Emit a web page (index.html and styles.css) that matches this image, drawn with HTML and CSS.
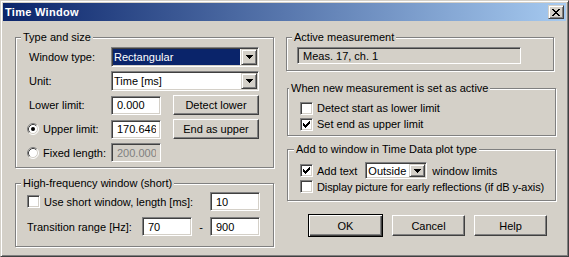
FILE: index.html
```html
<!DOCTYPE html>
<html lang="en">
<head>
  <meta charset="UTF-8" />
  <title>Time Window</title>
  <link rel="stylesheet" href="styles.css">
</head>
<body>
  <div class="window">
    <div class="titlebar">
      <span class="title">Time Window</span>
      <span class="close-btn">
        <svg width="8" height="7" viewBox="0 0 8 7"><path d="M0 0h2v1H0zM6 0h2v1H6zM1 1h2v1H1zM5 1h2v1H5zM2 2h4v1H2zM3 3h2v1H3zM2 4h4v1H2zM1 5h2v1H1zM5 5h2v1H5zM0 6h2v1H0zM6 6h2v1H6z" fill="#000"/></svg>
      </span>
    </div>

    <div class="dialog">
      <!-- left side -->
      <div class="col">
        <fieldset class="group group-type">
          <legend>Type and size</legend>
          <div class="type-grid">
            <span class="lbl">Window type:</span>
            <div class="combo combo-type">
              <span class="combo-text selected">Rectangular</span>
              <span class="drop-btn"><svg width="7" height="4" viewBox="0 0 7 4"><path d="M0 0h7v1H0zM1 1h5v1H1zM2 2h3v1H2zM3 3h1v1H3z"/></svg></span>
            </div>

            <span class="lbl">Unit:</span>
            <div class="combo combo-type">
              <span class="combo-text">Time [ms]</span>
              <span class="drop-btn"><svg width="7" height="4" viewBox="0 0 7 4"><path d="M0 0h7v1H0zM1 1h5v1H1zM2 2h3v1H2zM3 3h1v1H3z"/></svg></span>
            </div>

            <span class="lbl">Lower limit:</span>
            <input class="edit" type="text" value="0.000">
            <button class="btn btn-side">Detect lower</button>

            <label class="opt">
              <span class="radio"><svg width="12" height="12" viewBox="0 0 12 12">
                <circle cx="6" cy="6" r="5" fill="#fff"/>
                <path d="M9.89 2.11A5.5 5.5 0 0 0 2.11 9.89" stroke="#808080" fill="none"/>
                <path d="M2.11 9.89A5.5 5.5 0 0 0 9.89 2.11" stroke="#fff" fill="none"/>
                <path d="M9.18 2.82A4.5 4.5 0 0 0 2.82 9.18" stroke="#404040" fill="none"/>
                <path d="M2.82 9.18A4.5 4.5 0 0 0 9.18 2.82" stroke="#d4d0c8" fill="none"/>
                <circle cx="6" cy="6" r="2" fill="#000"/>
              </svg></span>
              Upper limit:
            </label>
            <input class="edit" type="text" value="170.646">
            <button class="btn btn-side">End as upper</button>

            <label class="opt">
              <span class="radio"><svg width="12" height="12" viewBox="0 0 12 12">
                <circle cx="6" cy="6" r="5" fill="#fff"/>
                <path d="M9.89 2.11A5.5 5.5 0 0 0 2.11 9.89" stroke="#808080" fill="none"/>
                <path d="M2.11 9.89A5.5 5.5 0 0 0 9.89 2.11" stroke="#fff" fill="none"/>
                <path d="M9.18 2.82A4.5 4.5 0 0 0 2.82 9.18" stroke="#404040" fill="none"/>
                <path d="M2.82 9.18A4.5 4.5 0 0 0 9.18 2.82" stroke="#d4d0c8" fill="none"/>
              </svg></span>
              Fixed length:
            </label>
            <input class="edit" type="text" value="200.000" disabled>
          </div>
        </fieldset>

        <fieldset class="group group-hf">
          <legend>High-frequency window (short)</legend>
          <div class="row">
            <label class="opt opt-check">
              <span class="check"></span>
              Use short window, length [ms]:
            </label>
            <input class="edit" type="text" value="10">
          </div>
          <div class="row row-range">
            <span>Transition range [Hz]:</span>
            <input class="edit edit-from" type="text" value="70">
            <span class="dash">-</span>
            <input class="edit" type="text" value="900">
          </div>
        </fieldset>
      </div>

      <!-- right side -->
      <div class="col">
        <fieldset class="group group-active">
          <legend>Active measurement</legend>
          <div class="field-ro">Meas. 17, ch. 1</div>
        </fieldset>

        <fieldset class="group group-new">
          <legend>When new measurement is set as active</legend>
          <label class="opt opt-check line">
            <span class="check"></span>
            Detect start as lower limit
          </label>
          <label class="opt opt-check line">
            <span class="check"><svg width="7" height="7" viewBox="0 0 7 7"><path d="M6 0h1v1H6zM5 1h2v1H5zM0 2h1v1H0zM4 2h3v1H4zM0 3h2v1H0zM3 3h3v1H3zM0 4h5v1H0zM1 5h3v1H1zM2 6h1v1H2z"/></svg></span>
            Set end as upper limit
          </label>
        </fieldset>

        <fieldset class="group group-plot">
          <legend>Add to window in Time Data plot type</legend>
          <div class="row row-text">
            <label class="opt opt-check">
              <span class="check"><svg width="7" height="7" viewBox="0 0 7 7"><path d="M6 0h1v1H6zM5 1h2v1H5zM0 2h1v1H0zM4 2h3v1H4zM0 3h2v1H0zM3 3h3v1H3zM0 4h5v1H0zM1 5h3v1H1zM2 6h1v1H2z"/></svg></span>
              Add text
            </label>
            <div class="combo combo-small">
              <span class="combo-text">Outside</span>
              <span class="drop-btn"><svg width="7" height="4" viewBox="0 0 7 4"><path d="M0 0h7v1H0zM1 1h5v1H1zM2 2h3v1H2zM3 3h1v1H3z"/></svg></span>
            </div>
            <span class="after">window limits</span>
          </div>
          <label class="opt opt-check line">
            <span class="check"></span>
            <span class="long">Display picture for early reflections (if dB y-axis)</span>
          </label>
        </fieldset>

        <div class="buttons">
          <button class="btn btn-dlg btn-default">OK</button>
          <button class="btn btn-dlg">Cancel</button>
          <button class="btn btn-dlg">Help</button>
        </div>
      </div>
    </div>
  </div>
</body>
</html>
```

FILE: styles.css
```css
* {
  box-sizing: border-box;
}
body {
  margin: 0;
  background: #d4d0c8;
  font-family: 'Liberation Sans', Arial, sans-serif;
  font-size: 11px;
  color: #000;
}
.window {
  width: 569px;
  height: 257px;
  overflow: hidden;
  background: #d4d0c8;
  border: 1px solid;
  border-color: #d4d0c8 #404040 #404040 #d4d0c8;
  box-shadow: inset 1px 1px 0 #fff, inset -1px -1px 0 #808080;
  padding: 2px;
}
.titlebar {
  height: 18px;
  display: flex;
  align-items: center;
  justify-content: space-between;
  padding: 0 2px;
  background: linear-gradient(to right, #0a246a, #a6caf0);
}
.title {
  color: #fff;
  font-weight: bold;
  letter-spacing: 0.3px;
}
.close-btn,
.drop-btn {
  display: flex;
  align-items: center;
  justify-content: center;
  background: #d4d0c8;
  border: 1px solid;
  border-color: #d4d0c8 #404040 #404040 #d4d0c8;
  box-shadow: inset 1px 1px 0 #fff, inset -1px -1px 0 #808080;
}
.close-btn {
  width: 16px;
  height: 14px;
}
.close-btn svg,
.drop-btn svg,
.check svg {
  display: block;
}

.dialog {
  display: grid;
  grid-template-columns: 259px 270px;
  column-gap: 12px;
  padding: 10px 0 0 12px;
}
.col {
  display: flex;
  flex-direction: column;
}

/* group boxes */
.group {
  margin: 0;
  min-width: 0;
  border: 1px solid #808080;
  box-shadow: 1px 1px 0 #fff, inset 1px 1px 0 #fff;
}
.group legend {
  padding: 0 2px;
  line-height: 13px;
  background: #d4d0c8;
}
.group-type {
  padding: 3px 13px 5px 11px;
}
.group-type legend,
.group-hf legend {
  margin-left: -6px;
}
.group-hf {
  margin-top: 9px;
  padding: 2px 13px 10px 11px;
}
.group-active {
  margin-right: 2px;
  padding: 3px 10px 6px 10px;
}
.group-active legend {
  margin-left: -5px;
}
.group-new {
  margin: 11px 0 0 1px;
  padding: 5px 10px 3px 12px;
}
.group-new legend {
  margin-left: -11px;
}
.group-plot {
  margin: 7px 0 0 1px;
  padding: 6px 4px 7px 12px;
}
.group-plot legend {
  margin-left: -6px;
}

/* type and size grid */
.type-grid {
  display: grid;
  grid-template-columns: 84px 50px 12px 86px;
  grid-template-rows: 20px 20px 20px 20px 19px;
  row-gap: 4px;
  align-items: center;
}
.lbl {
  padding-left: 2px;
}
.combo-type {
  grid-column: 2 / 5;
}
.btn-side {
  grid-column: 4;
}

/* inputs */
.edit,
.field-ro,
.combo,
.check {
  background: #fff;
  border: 1px solid;
  border-color: #808080 #fff #fff #808080;
  box-shadow: inset 1px 1px 0 #404040, inset -1px -1px 0 #d4d0c8;
}
.edit {
  width: 50px;
  height: 19px;
  padding: 0 4px 0 5px;
  font: inherit;
  color: #000;
  outline: none;
}
.edit:disabled {
  background: #d4d0c8;
  color: #808080;
}
.field-ro {
  width: 224px;
  height: 17px;
  padding-left: 5px;
  background: #d4d0c8;
  display: flex;
  align-items: center;
}
.combo {
  display: flex;
  height: 20px;
  padding: 1px;
}
.combo-text {
  flex: 1;
  display: flex;
  align-items: center;
  padding-left: 1px;
}
.combo-text.selected {
  background: #0a246a;
  color: #fff;
  margin-right: 1px;
}
.drop-btn {
  width: 16px;
}
.combo-small {
  width: 62px;
  height: 17px;
  margin-left: 8px;
}
.combo-small .combo-text {
  padding-left: 1px;
}

/* check boxes and radios */
.opt {
  display: flex;
  align-items: center;
  gap: 4px;
  white-space: nowrap;
}
.radio {
  width: 12px;
  height: 12px;
}
.radio svg {
  display: block;
}
.check {
  flex: none;
  width: 13px;
  height: 13px;
  padding: 2px;
}
.line {
  height: 16px;
}
.group-plot .line {
  height: 13px;
  margin-top: 1px;
}
.long {
  letter-spacing: -0.1px;
}

.row {
  display: flex;
  align-items: center;
  justify-content: space-between;
  height: 19px;
}
.row-range {
  margin-top: 6px;
  justify-content: flex-start;
}
.edit-from {
  margin-left: auto;
}
.dash {
  width: 18px;
  text-align: center;
}
.row-text {
  height: 17px;
  justify-content: flex-start;
}
.after {
  margin-left: 5px;
  white-space: nowrap;
}

/* buttons */
.btn {
  font: inherit;
  color: #000;
  padding: 0;
  background: #d4d0c8;
  border: 1px solid;
  border-color: #fff #404040 #404040 #fff;
  box-shadow: inset -1px -1px 0 #808080;
  height: 20px;
}
.buttons {
  display: flex;
  justify-content: flex-end;
  align-items: center;
  gap: 9px;
  margin-top: 13px;
  padding-right: 9px;
}
.btn-dlg {
  width: 73px;
  height: 21px;
}
.btn-default {
  width: 75px;
  height: 23px;
  border-color: #000;
  box-shadow: inset 1px 1px 0 #fff, inset -1px -1px 0 #404040, inset -2px -2px 0 #808080;
}
```
